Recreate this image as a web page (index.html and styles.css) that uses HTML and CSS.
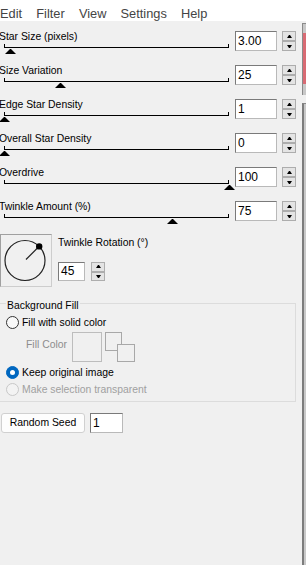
FILE: index.html
```html
<!DOCTYPE html>
<html>
<head>
    <title>Twinkling Stars</title>
    <meta charset="UTF-8">
    <link rel="stylesheet" href="styles.css">
</head>
<body>
    <div class="menubar">
        <span>Edit</span><span>Filter</span><span>View</span><span>Settings</span><span>Help</span>
    </div>

    <div class="window">
        <div class="panel">
            <div class="row">
                <div class="slider">
                    <div class="label">Star Size (pixels)</div>
                    <div class="track"><span class="thumb" style="left:2.7%"></span></div>
                </div>
                <div class="num">3.00</div>
                <div class="spin"><span class="up"></span><span class="down"></span></div>
            </div>
            <div class="row">
                <div class="slider">
                    <div class="label">Size Variation</div>
                    <div class="track"><span class="thumb" style="left:25%"></span></div>
                </div>
                <div class="num">25</div>
                <div class="spin"><span class="up"></span><span class="down"></span></div>
            </div>
            <div class="row">
                <div class="slider">
                    <div class="label">Edge Star Density</div>
                    <div class="track"><span class="thumb" style="left:0.4%"></span></div>
                </div>
                <div class="num">1</div>
                <div class="spin"><span class="up"></span><span class="down"></span></div>
            </div>
            <div class="row">
                <div class="slider">
                    <div class="label">Overall Star Density</div>
                    <div class="track"><span class="thumb" style="left:0%"></span></div>
                </div>
                <div class="num">0</div>
                <div class="spin"><span class="up"></span><span class="down"></span></div>
            </div>
            <div class="row">
                <div class="slider">
                    <div class="label">Overdrive</div>
                    <div class="track"><span class="thumb" style="left:100%"></span></div>
                </div>
                <div class="num">100</div>
                <div class="spin"><span class="up"></span><span class="down"></span></div>
            </div>
            <div class="row">
                <div class="slider">
                    <div class="label">Twinkle Amount (%)</div>
                    <div class="track"><span class="thumb" style="left:75%"></span></div>
                </div>
                <div class="num">75</div>
                <div class="spin"><span class="up"></span><span class="down"></span></div>
            </div>

            <div class="rot">
                <div class="dial">
                    <svg width="50" height="51" viewBox="0 0 50 51">
                        <circle cx="24" cy="25.5" r="20" fill="none" stroke="#222" stroke-width="1.2"/>
                        <line x1="25" y1="24.5" x2="38" y2="11.5" stroke="#222" stroke-width="1.2"/>
                        <circle cx="38.2" cy="11.4" r="3.2" fill="#000"/>
                    </svg>
                </div>
                <div class="rot-side">
                    <div class="label">Twinkle Rotation (&deg;)</div>
                    <div class="rot-input">
                        <div class="num small">45</div>
                        <div class="spin small"><span class="up"></span><span class="down"></span></div>
                    </div>
                </div>
            </div>

            <fieldset class="group">
                <legend>Background Fill</legend>
                <div class="opt"><span class="radio"></span>Fill with solid color</div>
                <div class="fill">
                    <span class="fill-label">Fill Color</span>
                    <span class="swatch"></span>
                    <svg class="swap" width="31" height="31" viewBox="0 0 31 31">
                        <rect x="0.5" y="0.5" width="16" height="18" fill="#f0f0f0" stroke="#a8a8a8"/>
                        <rect x="12.5" y="12.5" width="17" height="17" fill="#f0f0f0" stroke="#a8a8a8"/>
                    </svg>
                </div>
                <div class="opt second"><span class="radio on"></span>Keep original image</div>
                <div class="opt third disabled"><span class="radio off"></span>Make selection transparent</div>
            </fieldset>

            <div class="seed">
                <div class="btn">Random Seed</div>
                <div class="num seed-num">1</div>
            </div>
        </div>

        <div class="edge">
            <div class="e-top"></div>
            <div class="e-frame"><div class="e-red"></div></div>
            <div class="e-gap"></div>
            <div class="e-frame2"></div>
        </div>
    </div>
</body>
</html>
```

FILE: styles.css
```css
body {
    margin: 0;
    width: 306px;
    height: 565px;
    overflow: hidden;
    background: #f0f0f0;
    font-family: "Liberation Sans", Arial, sans-serif;
    font-size: 10.4px;
    color: #000;
}
.menubar {
    height: 21px;
    background: #fff;
    font-size: 12.8px;
    line-height: 27px;
    color: #444;
    white-space: nowrap;
    overflow: hidden;
}
.menubar span {
    margin-right: 14.2px;
}
.window {
    display: flex;
    height: 544px;
}
.panel {
    width: 302px;
    padding-top: 10px;
}
.row {
    display: flex;
    height: 34px;
}
.slider {
    width: 235px;
}
.label {
    height: 11px;
    line-height: 11px;
    margin-left: -1px;
    white-space: nowrap;
}
.track {
    position: relative;
    width: 225px;
    height: 1px;
    margin: 5px 0 0 4px;
    background: #000;
}
.track::before, .track::after {
    content: "";
    position: absolute;
    bottom: 0;
    width: 1px;
    height: 4px;
    background: #000;
}
.track::before { left: 0; }
.track::after { right: 0; }
.thumb {
    position: absolute;
    top: 2px;
    width: 1px;
    height: 0;
    margin-left: -5.5px;
    border-left: 5px solid transparent;
    border-right: 5px solid transparent;
    border-bottom: 5px solid #000;
}
.num {
    box-sizing: border-box;
    width: 42px;
    height: 20px;
    padding-left: 2px;
    background: #fff;
    border: 1px solid #7a7a7a;
    border-right-color: #b9b9b9;
    border-bottom-color: #b9b9b9;
    font-size: 12px;
    line-height: 18px;
}
.spin {
    display: flex;
    flex-direction: column;
    width: 14px;
    height: 20px;
    margin-left: 5px;
}
.spin span {
    flex: 1;
    box-sizing: border-box;
    display: flex;
    align-items: center;
    justify-content: center;
    border: 1px solid #adadad;
    background: #e4e4e4;
}
.spin .up::after, .spin .down::after {
    content: "";
    width: 1px;
    border-left: 2px solid transparent;
    border-right: 2px solid transparent;
}
.spin .up::after { border-bottom: 3px solid #000; }
.spin .down::after { border-top: 3px solid #000; }

/* rotation dial */
.rot {
    display: flex;
    height: 53px;
    margin-top: -1px;
}
.dial {
    box-sizing: border-box;
    width: 52px;
    height: 53px;
    border: 1px solid #a0a0a0;
    border-right-color: #cdcdcd;
    border-bottom-color: #cdcdcd;
}
.dial svg {
    display: block;
}
.rot-side {
    margin-left: 6px;
    padding-top: 3px;
}
.rot-side .label {
    margin-left: 0;
}
.rot-input {
    display: flex;
    margin-top: 14px;
}
.num.small {
    width: 27px;
    height: 19px;
    line-height: 17px;
}
.spin.small {
    height: 19px;
    margin-left: 6px;
}

/* background fill group */
.group {
    box-sizing: border-box;
    width: 298px;
    margin: 8.5px 0 0 -2px;
    padding: 3.5px 0 4px 7px;
    border: 1px solid #dcdcdc;
}
.group legend {
    padding: 4px 1px 0;
    line-height: 11px;
}
.opt {
    display: flex;
    align-items: center;
    height: 16px;
    white-space: nowrap;
}
.opt.second { margin-top: 2px; }
.opt.third { margin-top: 1px; }
.opt.disabled { color: #a0a0a0; }
.radio {
    box-sizing: border-box;
    width: 13px;
    height: 13px;
    margin-right: 3px;
    border: 1px solid #333;
    border-radius: 50%;
    background: #f9f9f9;
}
.radio.on {
    display: flex;
    align-items: center;
    justify-content: center;
    background: #0067c0;
    border-color: #0067c0;
}
.radio.on::after {
    content: "";
    width: 5px;
    height: 5px;
    border-radius: 50%;
    background: #fff;
}
.radio.off {
    border-color: #c8c8c8;
    background: #f3f3f3;
}
.fill {
    display: flex;
    align-items: flex-start;
    height: 30px;
    margin-top: 2px;
}
.fill-label {
    width: 46px;
    margin: 6.5px 0 0 20px;
    line-height: 11px;
    color: #8d8d8d;
}
.swatch {
    box-sizing: border-box;
    width: 30px;
    height: 30px;
    border: 1px solid #bdbdbd;
}
.swap {
    margin-left: 3px;
}

/* seed */
.seed {
    display: flex;
    margin: 11px 0 0 1px;
}
.btn {
    box-sizing: border-box;
    width: 84px;
    height: 20px;
    border: 1px solid #d0d0d0;
    border-radius: 3px;
    background: #fdfdfd;
    text-align: center;
    line-height: 18px;
}
.num.seed-num {
    width: 33px;
    margin-left: 5px;
}

/* neighbouring window edge */
.edge {
    display: flex;
    flex-direction: column;
    width: 4px;
}
.e-top {
    height: 2px;
}
.e-frame {
    box-sizing: border-box;
    height: 72px;
    padding-top: 9px;
    border-top: 1px solid #8a8a8a;
    border-left: 1px solid #8a8a8a;
    background: #c8c8c8;
}
.e-red {
    height: 51px;
    background: #d96b74;
}
.e-gap {
    height: 8px;
}
.e-frame2 {
    flex: 1;
    border-top: 1px solid #8a8a8a;
    border-left: 2px solid #7d7d7d;
    background: #c9c9c9;
}
```
